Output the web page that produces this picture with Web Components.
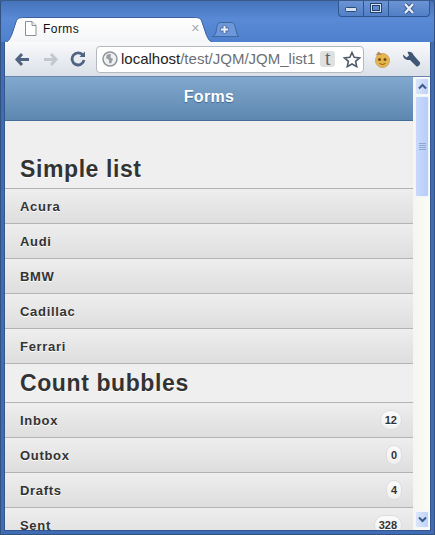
<!DOCTYPE html>
<html><head><meta charset="utf-8"><title>Forms</title>
<style>
html,body{margin:0;padding:0;background:#3b5f96;overflow:hidden}
body{width:435px;height:535px;font-family:"Liberation Sans",Arial,sans-serif}
</style></head><body>
<x-browser>
  <x-tabstrip title-text="Forms"></x-tabstrip>
  <x-toolbar></x-toolbar>
  <x-viewport>
    <x-header>Forms</x-header>
    <x-heading class="first">Simple list</x-heading>
    <x-row>Acura</x-row><x-row>Audi</x-row><x-row>BMW</x-row><x-row>Cadillac</x-row><x-row>Ferrari</x-row>
    <x-heading>Count bubbles</x-heading>
    <x-row count="12">Inbox</x-row><x-row count="0">Outbox</x-row><x-row count="4">Drafts</x-row><x-row count="328">Sent</x-row>
  </x-viewport>
</x-browser>
<script>
function def(name,html,init){customElements.define(name,class extends HTMLElement{
  constructor(){super();this.attachShadow({mode:'open'}).innerHTML=html;}
  connectedCallback(){if(init)init.call(this,this.shadowRoot);}
});}
def('x-browser',`<style>
:host{display:flex;flex-direction:column;width:435px;height:535px;box-sizing:border-box;border:1px solid #34527f;border-top-color:#3a5a8c;border-radius:4px 4px 0 0;background:#3f6cb4;overflow:hidden}
</style><slot></slot>`);
def('x-tabstrip',`<style>
:host{display:block;position:relative;height:41px;flex:none;box-sizing:border-box;padding-top:15px;background:linear-gradient(#4674bb,#5a8ad6 45%,#4f80cd);color:#111}
.tab{position:absolute;left:3px;top:16px;width:210px;height:25px}
.tabc{position:relative;margin-left:23px;width:176px;height:26px;box-sizing:border-box;padding-top:5px;display:flex;align-items:flex-start;gap:6px;font:12px/16px "Liberation Sans",sans-serif;letter-spacing:.45px}
.tabc svg{flex:none}
.x{margin-left:auto;color:#a6abb2;font:11px/16px "DejaVu Sans",sans-serif;letter-spacing:0}
.new{position:absolute;left:210px;top:21px;width:28px;height:15px}
.caps{position:absolute;right:4px;top:-1px;width:92px;height:17px;display:flex;box-sizing:border-box;border:1px solid #2f5590;border-top:0;border-radius:0 0 4px 4px;background:linear-gradient(#6d95d5,#517fc6)}
.caps div{display:flex;align-items:center;justify-content:center;box-sizing:border-box;border-left:1px solid #2f5590}
.caps div:first-child{border:0}
</style>
<svg class="tab" viewBox="0 0 210 25"><defs><linearGradient id="g" x1="0" y1="0" x2="0" y2="1"><stop offset="0" stop-color="#fff"/><stop offset="1" stop-color="#f4f5f7"/></linearGradient></defs>
<path d="M0 25.500C4 25.500 6 22 8 17L12 5C13 1.500 15 .5 20 .5H190C195 .5 197 1.500 198 5L202 17C204 22 206 25.500 210 25.500Z" fill="url(#g)" stroke="#3c629e" stroke-width="1"/></svg>
<div class="tabc">
<svg width="13" height="15" viewBox="0 0 13 15"><path d="M1.500 .5H8L12 4.500V14.500H1.500Z" fill="#fff" stroke="#8b8f94"/><path d="M8 .5V4.500H12" fill="#eee" stroke="#8b8f94"/></svg>
<span>Forms</span><span class="x">✕</span></div>
<svg class="new" viewBox="0 0 28 15"><path d="M1 14.500C3 14.500 4 13 5 10L6 4C7 1 8 .5 10 .5H20C22 .5 23 1.500 24 4L26 12C26.500 13.500 27 14.500 28 14.500Z" fill="#6d97da" stroke="#3f689f"/><path d="M9.500 7.500H17.500M13.500 3.500V11.500" stroke="#4a6a9c" stroke-width="4"/><path d="M10 7.500H17M13.500 4V11" stroke="#eef3fb" stroke-width="2"/></svg>
<div class="caps">
<div style="width:24px;padding:4px 0 0 0"><svg width="13" height="6" viewBox="0 0 13 6"><rect x=".5" y=".5" width="11" height="4" rx="1" fill="#d6e0ef" stroke="#2c4a78"/></svg></div>
<div style="width:25px"><svg width="12" height="10" viewBox="0 0 12 10"><rect x="1.500" y="1.500" width="9" height="7" fill="none" stroke="#24406c" stroke-width="3"/><rect x="1.500" y="1.500" width="9" height="7" fill="none" stroke="#d7e2f1"/></svg></div>
<div style="flex:1"><svg width="12" height="11" viewBox="0 0 12 11"><path d="M2 1L10 10M10 1L2 10" stroke="#2f4d7c" stroke-width="4"/><path d="M2 1L10 10M10 1L2 10" stroke="#e6edf7" stroke-width="2.400"/></svg></div>
</div>`,function(r){r.querySelector('.tabc span').textContent=this.getAttribute('title-text');});
def('x-toolbar',`<style>
:host{display:flex;align-items:center;flex:none;height:35px;box-sizing:border-box;margin:0 3px;padding:0 8px 1px 9px;background:linear-gradient(#f9fafb,#eef0f4 35%,#d9dfe8);border:solid #34578f;border-width:0 1px;box-shadow:inset 0 -1px 0 #6a85aa;position:relative}
.nav{display:flex;width:28px;flex:none;justify-content:flex-start}
.url{margin-left:2px;width:268px;height:27px;box-sizing:border-box;border:1px solid #b4b9c0;border-radius:4px;background:#fff;display:flex;align-items:center;padding:0 2px 0 5px;font:15px/20px "Liberation Sans",sans-serif;white-space:nowrap;color:#222;overflow:hidden}
.path{color:#6c7075}
.t{margin-left:5px;width:15px;height:16px;background:#dfe0e0;border-radius:3px;font:20px/15px "Liberation Serif",serif;color:#666;text-align:center;flex:none}
.star{margin-left:auto;flex:none}
</style>
<div class="nav"><svg width="17" height="15" viewBox="0 0 17 15"><path d="M8 2L3 7.500L8 13M3.500 7.500H15" fill="none" stroke="#4f6482" stroke-width="3"/></svg></div>
<div class="nav"><svg width="17" height="15" viewBox="0 0 17 15"><path d="M9 2L14 7.500L9 13M13.500 7.500H2" fill="none" stroke="#c3c8cf" stroke-width="3"/></svg></div>
<div class="nav" style="width:24px"><svg width="16" height="16" viewBox="0 0 16 16"><path d="M13 4.500A6 6 0 1 0 14 9" fill="none" stroke="#4f6482" stroke-width="2.800"/><path d="M9.500 6H15V0.500Z" fill="#4f6482"/></svg></div>
<div class="url"><svg width="16" height="16" viewBox="0 0 16 16" style="flex:none;margin-right:3px"><circle cx="8" cy="8" r="7" fill="#eef0f2" stroke="#8f9499" stroke-width="1.500"/><path d="M5 3.500L9 3L8.500 6.500L11 8L9 12.500L7 12L7 9L4 7Z" fill="#9a9da1"/></svg><span>localhost</span><span class="path">/test/JQM/JQM_list1</span><span class="t">t</span>
<svg class="star" width="18" height="17" viewBox="0 0 18 17"><path d="M9 1.500L11.200 6.300L16.500 6.900L12.600 10.400L13.700 15.600L9 13L4.300 15.600L5.400 10.400L1.500 6.900L6.800 6.300Z" fill="#fff" stroke="#4f5c6c" stroke-width="1.600"/></svg></div>
<svg style="margin-left:9px;flex:none" width="18" height="17" viewBox="0 0 18 17"><circle cx="9.500" cy="9.500" r="7" fill="#e8b54a" stroke="#c9a468"/><path d="M2.500 4.500L5.500 .5L9 3.500Z" fill="#b4865a"/><circle cx="6.500" cy="8.500" r="1.500" fill="#6b4a20"/><circle cx="12" cy="8.500" r="1.500" fill="#6b4a20"/><path d="M6.500 12.500Q9.500 14.500 12.500 12.500" stroke="#8a5a20" fill="none"/></svg>
<svg style="margin-left:11px;flex:none" width="19" height="17" viewBox="0 0 19 17"><path d="M1 3.500L4.500 6.500L7 4.500L5.500 1C8 .2 10.500 1 11.500 4L18 11.500C18.700 13 16.500 16 14.500 15.500L8 9C4.500 9.500 .8 7.500 1 3.500Z" fill="#3f5674"/></svg>`);
def('x-viewport',`<style>
:host{display:flex;flex:1;min-height:0;margin:0 4px 4px;background:#f0f0f0;overflow:hidden;box-shadow:0 0 0 1px #34578f}
.page{flex:1;min-width:0;overflow:hidden;background:#efefef}
.sb{flex:none;width:17px;box-sizing:border-box;background:linear-gradient(90deg,#f6f6f0,#fcfcf6);display:flex;flex-direction:column;padding:1px 1px 2px 2px;gap:1px}
.btn{height:15px;flex:none;background:linear-gradient(90deg,#dbe6fb,#bfd2f7);border:1px solid #f2f6fd;border-radius:2px;display:flex;align-items:center;justify-content:center}
.thumb{height:99px;flex:none;background:linear-gradient(90deg,#c9d9fb,#b7cdf8);border:1px solid #f0f4fc;border-radius:2px;display:flex;align-items:center;justify-content:center}
.sp{flex:1}
</style><div class="page"><slot></slot></div>
<div class="sb"><div class="btn"><svg width="9" height="7" viewBox="0 0 9 7"><path d="M1 5.500L4.500 2L8 5.500" fill="none" stroke="#3b5a8c" stroke-width="2"/></svg></div>
<div class="thumb"><svg width="7" height="7" viewBox="0 0 7 7"><path d="M0 .5H7M0 2.500H7M0 4.500H7M0 6.500H7" stroke="#8fa6cf"/></svg></div>
<div class="sp"></div>
<div class="btn"><svg width="9" height="7" viewBox="0 0 9 7"><path d="M1 1.500L4.500 5L8 1.500" fill="none" stroke="#3b5a8c" stroke-width="2"/></svg></div></div>`);
def('x-header',`<style>
:host{display:flex;align-items:center;justify-content:center;height:44px;box-sizing:border-box;padding-bottom:4px;background:linear-gradient(#81a8ce,#5e87b0);border-bottom:1px solid #456f9a;color:#fff;font:bold 16px "Liberation Sans",sans-serif;text-shadow:0 1px 1px #3e6790;letter-spacing:.3px}
</style><slot></slot>`);
def('x-heading',`<style>
:host{display:flex;align-items:center;height:39px;box-sizing:border-box;padding-left:15px;color:#333;font:bold 23px "Liberation Sans",sans-serif;letter-spacing:.6px;text-shadow:0 1px 0 #fff;border-bottom:1px solid #b3b3b3}
:host(.first){height:68px;padding-top:29px}
</style><slot></slot>`);
def('x-row',`<style>
:host{display:flex;align-items:center;justify-content:space-between;height:35px;box-sizing:border-box;padding:0 11px 0 15px;background:linear-gradient(#eeeeee,#dedede);border-bottom:1px solid #b3b3b3;color:#333;font:bold 13px "Liberation Sans",sans-serif;letter-spacing:.7px;text-shadow:0 1px 0 #fff}
.b{font-size:11px;line-height:13px;letter-spacing:0;padding:3px 4px 2px;text-align:center;background:linear-gradient(#fbfbfb,#efefef);border:1px solid #dedede;border-radius:10px;color:#333}
.b:empty{display:none}
</style><slot></slot><span class="b"></span>`,function(r){r.querySelector('.b').textContent=this.getAttribute('count')||'';});
</script>
</body></html>
